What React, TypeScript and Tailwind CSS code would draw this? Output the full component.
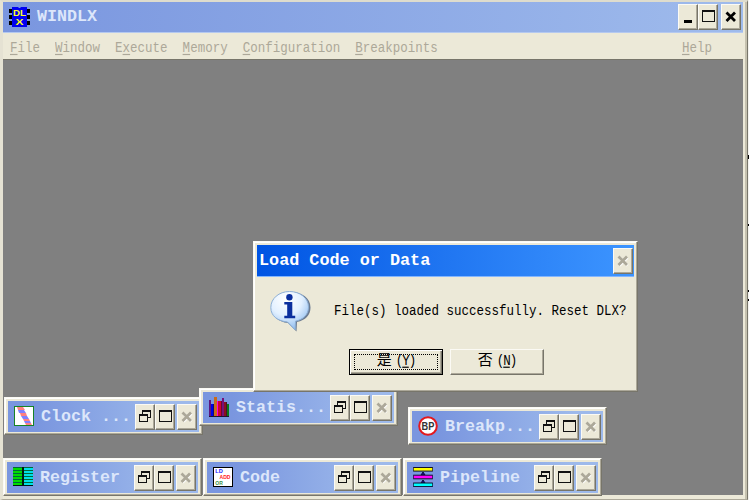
import type { ReactNode } from "react";

const raised =
  "border border-t-[#fbfaf4] border-l-[#fbfaf4] border-r-[#77756a] border-b-[#77756a] bg-[#ece9d8]";

function CloseGlyph({ disabled }: { disabled?: boolean }) {
  return (
    <svg className="h-[12px] w-[12px]" viewBox="0 0 12 12" fill="none" strokeWidth="2.8">
      {disabled && <path d="M2.5 2.5l8 8M10.5 2.5l-8 8" stroke="#fff" />}
      <path d="M1.5 1.5l8.500 8.500M10 1.500l-8.500 8.500" stroke={disabled ? "#aca899" : "#000"} />
    </svg>
  );
}

function MaxGlyph() {
  return (
    <svg className="-mt-0.5 h-[12px] w-[13px]" viewBox="0 0 13 12" fill="none" stroke="#111" shapeRendering="crispEdges">
      <path d="M.5 1v10.5h12V1" />
      <path d="M0 1h13" strokeWidth="2" />
    </svg>
  );
}

function RestoreGlyph() {
  return (
    <svg className="-mt-0.5 h-[12px] w-[12px]" viewBox="0 0 12 12" fill="none" stroke="#111" shapeRendering="crispEdges">
      <path d="M3.5 4V1M11.5 1v6.5H9M.5 5v6.5h8V5" />
      <path d="M3 1h9M0 5h9" strokeWidth="2" />
    </svg>
  );
}

function TitleButton({ children, className = "" }: { children: ReactNode; className?: string }) {
  return (
    <button
      className={`flex h-[26px] w-[20px] shrink-0 items-center justify-center shadow-[inset_-1px_-1px_0_#aca899] ${raised} ${className}`}
    >
      {children}
    </button>
  );
}

function ClockIcon() {
  return (
    <svg className="h-5 w-5" viewBox="0 0 20 20">
      <rect x=".5" y=".5" width="19" height="19" fill="#fff" stroke="#178324" />
      <path d="M3 1h6l2 3H4z" fill="#ff8080" />
      <path d="M4 4h6l2 3H5z" fill="#8080ff" />
      <path d="M6 7h6l1 3H7z" fill="#ff8080" />
      <path d="M7 10h6l2 3H9z" fill="#8080ff" />
      <path d="M9 13h6l1 2h-6z" fill="#ff8080" />
      <path d="M10 15h6l1 2h-6z" fill="#8080ff" />
      <path d="M11 17h6l1 2h-6z" fill="#ff8080" />
    </svg>
  );
}

function BooksIcon() {
  return (
    <svg className="h-5 w-5" viewBox="0 0 20 20" shapeRendering="crispEdges">
      <path d="M0 3h2v16H0z" fill="#5b1680" />
      <path d="M2 7h3v12H2z" fill="#0000e8" />
      <path d="M5 0h3v19H5z" fill="#c96a19" />
      <path d="M8 4h1v15H8z" fill="#ff00e0" />
      <path d="M9 4h4v15H9z" fill="#d00030" />
      <path d="M13 1h2v18h-2z" fill="#74107a" />
      <path d="M15 5h3v14h-3z" fill="#8a1020" />
      <path d="M18 7h2v12h-2z" fill="#087818" />
      <path d="M0 19h20v1H0z" fill="#201030" />
      <path d="M4 7h1v12H4zM12 4h1v15h-1zM17 5h1v14h-1z" fill="#201030" opacity=".6" />
    </svg>
  );
}

function BreakIcon() {
  return (
    <svg className="h-5 w-5" viewBox="0 0 20 20">
      <circle cx="10" cy="10" r="8.8" fill="#fff" stroke="#e3191e" strokeWidth="2" />
      <text x="3.6" y="14" textLength="12.8" lengthAdjust="spacingAndGlyphs" fontSize="11" fontWeight="bold" fontFamily="Liberation Sans, sans-serif" fill="#333">
        BP
      </text>
    </svg>
  );
}

function RegisterIcon() {
  return (
    <svg className="h-5 w-5" viewBox="0 0 20 20" shapeRendering="crispEdges">
      <path d="M0 0h20v19H0z" fill="#006838" />
      {[0, 3, 6, 9, 12, 15].map((y) => (
        <g key={y}>
          <path d={`M0 ${y + 1}h9v2H0z`} fill="#00dc00" />
          <path d={`M11 ${y + 1}h9v2h-9z`} fill="#00dfe8" />
        </g>
      ))}
      <path d="M9 0h2v19H9zM0 18h20v1H0z" fill="#001810" />
    </svg>
  );
}

function CodeIcon() {
  return (
    <svg className="h-5 w-5" viewBox="0 0 20 20" fontFamily="Liberation Sans, sans-serif" fontWeight="bold">
      <rect x=".5" y=".5" width="19" height="19" fill="#fff" stroke="#000" />
      <text x="2.300" y="6.200" fontSize="5" textLength="7.500" lengthAdjust="spacingAndGlyphs" fill="#2222ff">LD</text>
      <text x="6.500" y="12" fontSize="5" textLength="11" lengthAdjust="spacingAndGlyphs" fill="#ff2222">ADD</text>
      <text x="2.300" y="17.800" fontSize="5" textLength="7.500" lengthAdjust="spacingAndGlyphs" fill="#3a9048">OR</text>
    </svg>
  );
}

function PipelineIcon() {
  return (
    <svg className="h-5 w-5" viewBox="0 0 20 20" stroke="#101030" strokeWidth="1">
      <path d="M8 8l2-3 2 3zM8 16l2-3 2 3z" fill="#0000b0" />
      <path d="M.2.5h19.6v3.6H.2z" fill="#ffff00" />
      <path d="M.2 8.2h19.6v3.6H.2z" fill="#f0f" />
      <path d="M.2 16h19.6v3.6H.2z" fill="#0ff" />
    </svg>
  );
}

function DlxIcon() {
  return (
    <svg className="h-5 w-[21px]" viewBox="0 0 21 20" fontFamily="Liberation Sans, sans-serif" fontWeight="bold" fill="#ffff20">
      <path d="M0 2h3v4H0zM0 8h3v4H0zM0 14h3v4H0zM18 2h3v4h-3zM18 8h3v4h-3zM18 14h3v4h-3z" fill="#000" />
      <path d="M3 0h6l1 1h1l1-1h6v20H3z" fill="#0000f0" />
      <text x="4" y="8.600" fontSize="8.500" textLength="13" lengthAdjust="spacingAndGlyphs">DL</text>
      <text x="6.500" y="18.300" fontSize="8.500" textLength="8" lengthAdjust="spacingAndGlyphs">X</text>
    </svg>
  );
}

function InfoIcon() {
  return (
    <svg className="h-[41px] w-[41px]" viewBox="0 0 41 41">
      <defs>
        <radialGradient id="bubble" cx=".4" cy=".2" r=".85">
          <stop offset="0" stopColor="#fff" />
          <stop offset=".5" stopColor="#e2f0ff" />
          <stop offset="1" stopColor="#86b7ee" />
        </radialGradient>
      </defs>
      <path d="M21 1C32 1 40.500 7 40.500 16.500c0 8-5 12.500-13.500 14.500l-.5 9.500L18 32C8 31 2 25 2 17 2 8 10 1 21 1z" fill="#4b5f80" opacity=".8" />
      <path d="M19.500.5C30 .5 38.500 7 38.500 16c0 7.500-5 12.500-13 14.200l-.3 8.800L17.500 31C7.500 30 .8 25 .8 16.500.8 7.500 9 .5 19.500.5z" fill="url(#bubble)" stroke="#8dafd5" strokeWidth="1" />
      <circle cx="19.400" cy="6.300" r="3.200" fill="#0b2f9e" />
      <path d="M14.300 10.900h8v13.900h2.900v2.500H14.300v-2.500h2.900V13.400h-2.900z" fill="#0b2f9e" />
    </svg>
  );
}

function ChildWindow({ place, title, icon }: { place: string; title: string; icon: ReactNode }) {
  return (
    <section
      className={`absolute h-[38px] w-[199px] p-[3px] shadow-[inset_-1px_-1px_0_#aca899,inset_1px_1px_0_#fff] ${raised} ${place}`}
    >
      <div className="flex h-[31px] items-center bg-linear-to-r from-[#7a96df] from-15% to-[#9db9eb] to-85% pl-1.5 pr-px">
        <span className="-mt-0.5 shrink-0">{icon}</span>
        <h2 className="ml-[7px] w-[94px] shrink-0 whitespace-pre text-[16.67px] font-bold leading-5 text-[#dce6fa]">{title}</h2>
        <TitleButton><RestoreGlyph /></TitleButton>
        <TitleButton><MaxGlyph /></TitleButton>
        <TitleButton className="ml-0.5"><CloseGlyph disabled /></TitleButton>
      </div>
    </section>
  );
}

function MenuItem({ before = "", hot, after, className = "" }: { before?: string; hot: string; after: string; className?: string }) {
  return (
    <span className={`scale-y-[1.18] ${className}`}>
      {before}
      <span className="underline underline-offset-2">{hot}</span>
      {after}
    </span>
  );
}

export default function App() {
  return (
    <div className="flex h-[500px] w-[749px] overflow-hidden bg-[#f4f3ee] font-['Liberation_Mono','Noto_Sans_CJK_SC',monospace]">
      <main className="relative flex w-[748px] flex-col border-b border-l-[3px] border-r border-t-2 border-b-[#aca899] border-l-[#e5e2d3] border-r-[#77756a] border-t-[#dedccd] bg-[#ece9d8] pr-1 shadow-[inset_-2px_0_0_#c5c1af]">
        <header className="flex h-[31px] shrink-0 items-center border-b border-[#b5c9ef] bg-linear-to-r from-[#7a96df] to-[#9fbbec] pl-1.5 pr-[2px]">
          <DlxIcon />
          <h1 className="ml-[7px] flex-1 text-[16.67px] font-bold leading-5 text-[#dce6fa]">WINDLX</h1>
          <TitleButton>
            <span className="mt-[9px] h-[3px] w-2 bg-black" />
          </TitleButton>
          <TitleButton><MaxGlyph /></TitleButton>
          <TitleButton className="ml-[3px]"><CloseGlyph /></TitleButton>
        </header>
        <nav className="flex h-[26px] shrink-0 items-center gap-[15px] pl-[7px] pr-[31px] pt-[3px] text-[12.5px] leading-4 text-[#aca899]">
          <MenuItem hot="F" after="ile" />
          <MenuItem hot="W" after="indow" />
          <MenuItem before="E" hot="x" after="ecute" />
          <MenuItem hot="M" after="emory" />
          <MenuItem hot="C" after="onfiguration" />
          <MenuItem hot="B" after="reakpoints" />
          <MenuItem hot="H" after="elp" className="ml-auto" />
        </nav>
        <div className="h-[436px] shrink-0 border-t border-[#77756a] bg-[#808080]" />

        <ChildWindow place="left-[1px] top-[395px]" title="Clock ..." icon={<ClockIcon />} />
        <ChildWindow place="left-[196px] top-[386px]" title="Statis..." icon={<BooksIcon />} />
        <ChildWindow place="left-[405px] top-[405px]" title="Breakp..." icon={<BreakIcon />} />
        <ChildWindow place="left-0 top-[456px]" title="Register" icon={<RegisterIcon />} />
        <ChildWindow place="left-[200px] top-[456px]" title="Code" icon={<CodeIcon />} />
        <ChildWindow place="left-[400px] top-[456px]" title="Pipeline" icon={<PipelineIcon />} />

        <section
          role="dialog"
          className={`absolute left-[250px] top-[239px] h-[151px] w-[385px] p-[3px] shadow-[inset_-1px_-1px_0_#aca899,inset_1px_1px_0_#fff] ${raised}`}
        >
          <div className="flex h-8 items-center border-b border-[#83b6ff] bg-linear-to-r from-[#0054e3] to-[#3d95ff] pl-0.5 pr-px">
            <h2 className="flex-1 text-[16.8px] font-bold leading-5 text-white">Load Code or Data</h2>
            <TitleButton><CloseGlyph disabled /></TitleButton>
          </div>
          <div className="flex items-start pl-[13px] pt-[14px]">
            <InfoIcon />
            <p className="ml-[23px] mt-[12px] scale-y-[1.18] whitespace-nowrap text-[12.5px] leading-4 text-black">
              File(s) loaded successfully. Reset DLX?
            </p>
          </div>
          <div className="mt-[17px] flex gap-[7px] pl-[92px]">
            <button className="h-[26px] w-[94px] border border-black bg-[#ece9d8] p-[4px] text-[12.5px] text-black shadow-[inset_1px_1px_0_#fff,inset_-1px_-1px_0_#77756a,inset_-2px_-2px_0_#aca899]">
              <span className="flex h-4 items-center justify-center border border-dotted border-black">
                <span className="text-[15px] leading-4">是</span>
                <span className="ml-1 scale-y-[1.18] tracking-[-1px]">(<u>Y</u>)</span>
              </span>
            </button>
            <button className={`flex h-[26px] w-[94px] items-center justify-center text-[12.5px] text-black shadow-[inset_-1px_-1px_0_#aca899] ${raised}`}>
              <span className="text-[15px] leading-4">否</span>
              <span className="ml-1 scale-y-[1.18] tracking-[-1px]">(<u>N</u>)</span>
            </button>
          </div>
        </section>
      </main>
      <aside className="flex w-px flex-col">
        <span className="mt-[155px] h-1 bg-black" />
        <span className="mt-[65px] h-0.5 bg-black" />
        <span className="mt-[64px] h-0.5 bg-black" />
        <span className="mt-[7px] h-0.5 bg-black" />
      </aside>
    </div>
  );
}
